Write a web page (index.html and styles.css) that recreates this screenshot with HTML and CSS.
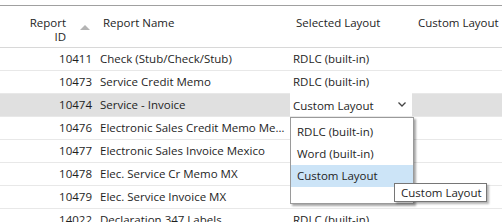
FILE: index.html
```html
<!DOCTYPE html>
<html>
<head>
<meta charset="utf-8">
<link rel="stylesheet" href="styles.css">
</head>
<body>
<div class="grid">
  <div class="row head">
    <div class="c id"><span class="idtxt">Report<br>ID</span><span class="sort"></span></div>
    <div class="c name">Report Name</div>
    <div class="c sel">Selected Layout</div>
    <div class="c cust">Custom Layout</div>
  </div>
  <div class="row"><div class="c id">10411</div><div class="c name">Check (Stub/Check/Stub)</div><div class="c sel">RDLC (built-in)</div><div class="c cust"></div></div>
  <div class="row"><div class="c id">10473</div><div class="c name">Service Credit Memo</div><div class="c sel">RDLC (built-in)</div><div class="c cust"></div></div>
  <div class="row current"><div class="c id">10474</div><div class="c name">Service - Invoice</div><div class="c sel edit"><span>Custom Layout</span><svg class="chev" width="8" height="5" viewBox="0 0 8 5"><path d="M0.5 0.5 L4 4 L7.5 0.5" fill="none" stroke="#444" stroke-width="1.3"/></svg>
      <div class="list">
        <div class="opt">RDLC (built-in)</div>
        <div class="opt">Word (built-in)</div>
        <div class="opt hover">Custom Layout</div>
      </div>
      <div class="tip">Custom Layout</div>
    </div><div class="c cust"></div></div>
  <div class="row"><div class="c id">10476</div><div class="c name">Electronic Sales Credit Memo Mexico</div><div class="c sel"></div><div class="c cust"></div></div>
  <div class="row"><div class="c id">10477</div><div class="c name">Electronic Sales Invoice Mexico</div><div class="c sel"></div><div class="c cust"></div></div>
  <div class="row"><div class="c id">10478</div><div class="c name">Elec. Service Cr Memo MX</div><div class="c sel"></div><div class="c cust"></div></div>
  <div class="row"><div class="c id">10479</div><div class="c name">Elec. Service Invoice MX</div><div class="c sel"></div><div class="c cust"></div></div>
  <div class="row"><div class="c id">14022</div><div class="c name">Declaration 347 Labels</div><div class="c sel">RDLC (built-in)</div><div class="c cust"></div></div>
</div>
</body>
</html>
```
FILE: styles.css
```css
html, body {
  margin: 0;
  padding: 0;
  background: #fff;
  overflow: hidden;
}
body {
  font-family: "Open Sans", "Noto Sans", sans-serif;
  font-size: 11.5px;
  color: #1e1e1e;
}
.grid {
  margin-top: 5px;
  border-top: 1px solid #a0a0a0;
}
.row {
  display: grid;
  grid-template-columns: 97px 193px 122px 1fr;
  height: 22px;
  border-bottom: 1px solid #e8e8e8;
  align-items: center;
}
.row.head {
  height: 41px;
  align-items: start;
  border-bottom: 1px solid #d8d8d8;
}
.c {
  white-space: nowrap;
  overflow: hidden;
  text-overflow: ellipsis;
  line-height: 22px;
}
.head .c {
  line-height: 14px;
  padding-top: 10px;
  overflow: visible;
}
.id {
  text-align: right;
  padding-right: 5px;
}
.name, .sel, .cust {
  padding-left: 3px;
}
.head .name, .head .sel, .head .cust {
  padding-left: 6px;
}
.head .id {
  display: flex;
  justify-content: flex-end;
  align-items: flex-start;
  padding-right: 31px;
  position: relative;
}
.sort {
  position: absolute;
  right: 7px;
  top: 19px;
  width: 0;
  height: 0;
  border-left: 5px solid transparent;
  border-right: 5px solid transparent;
  border-bottom: 5px solid #b4b4b4;
}
.current {
  background: #e0e0e0;
}
.sel.edit {
  overflow: visible;
  position: relative;
  background: #fff;
  height: 23px;
  margin-top: -1px;
  display: flex;
  align-items: center;
  justify-content: space-between;
  padding-right: 6px;
}
.sel.edit span {
  line-height: 23px;
  padding-top: 1px;
}
.chev {
  display: block;
}
.list {
  position: absolute;
  left: 0;
  top: 24px;
  width: 124px;
  height: 87px;
  background: #fff;
  border: 1px solid #9a9a9a;
  box-shadow: 2px 2px 2px rgba(0,0,0,0.35);
  padding-top: 3px;
  box-sizing: border-box;
  z-index: 2;
}
.opt {
  height: 22px;
  line-height: 22px;
  padding-left: 6px;
}
.opt.hover {
  background: #cce4f7;
}
.tip {
  position: absolute;
  left: 104px;
  top: 90px;
  width: 93px;
  height: 19px;
  box-sizing: border-box;
  background: #fff;
  border: 1px solid #767676;
  box-shadow: 2px 2px 2px rgba(0,0,0,0.3);
  line-height: 17px;
  padding-left: 6px;
  z-index: 3;
}
```
